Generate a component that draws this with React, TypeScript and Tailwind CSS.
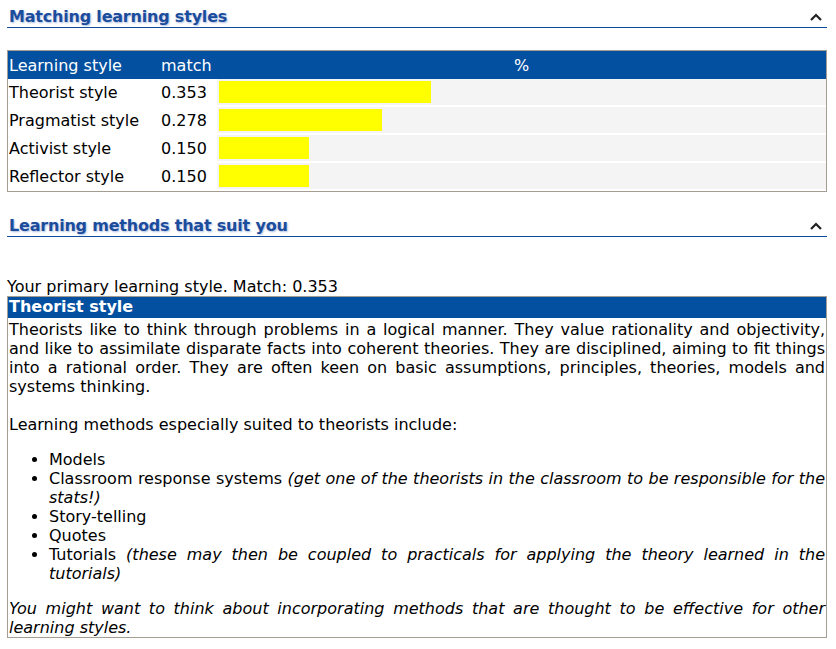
import React from "react";

const font = { fontFamily: '"DejaVu Sans", "Liberation Sans", sans-serif' };

function Chevron() {
  return (
    <svg width="14" height="10" viewBox="0 0 14 10" className="mr-[4px]">
      <path d="M2 8 L7 3 L12 8" fill="none" stroke="#222" strokeWidth="2.2" />
    </svg>
  );
}

function Heading({ title }: { title: string }) {
  return (
    <div className="flex h-[28px] items-center justify-between border-b border-[#0e4a9a] pt-[6px]">
      <span className="pl-[2px] text-[16px] font-bold tracking-[-0.2px] text-[#1c4c9c] [text-shadow:1px_1px_2px_#a9bde0]">
        {title}
      </span>
      <Chevron />
    </div>
  );
}

const rows = [
  { name: "Theorist style", match: "0.353", w: 212 },
  { name: "Pragmatist style", match: "0.278", w: 163 },
  { name: "Activist style", match: "0.150", w: 90 },
  { name: "Reflector style", match: "0.150", w: 90 },
];

export default function App() {
  return (
    <div className="ml-[7px] w-[820px] text-[16px] leading-[19px] text-black" style={font}>
      <Heading title="Matching learning styles" />
      <div className="mt-[22px] w-[820px] border border-[#a39d92]">
        <div className="flex h-[28px] items-center bg-[#0350a0] text-white">
          <div className="w-[152px] pl-[1px]">Learning style</div>
          <div className="w-[57px] pl-[1px]">match</div>
          <div className="flex-1 text-center">%</div>
        </div>
        {rows.map((r) => (
          <div key={r.name} className="flex h-[28px] pb-[2px]">
            <div className="flex w-[152px] items-center pl-[1px]">{r.name}</div>
            <div className="flex w-[57px] items-center pl-[1px]">{r.match}</div>
            <div className="flex-1 bg-[#f4f4f4] py-[2px] pl-[2px]">
              <div className="h-[22px] bg-[#ffff00]" style={{ width: r.w }} />
            </div>
          </div>
        ))}
      </div>
      <div className="mt-[17px]">
        <Heading title="Learning methods that suit you" />
      </div>
      <div className="mt-[40px]">Your primary learning style. Match: 0.353</div>
      <div className="border border-[#a39d92]">
        <div className="h-[21px] bg-[#0350a0] pl-[1px] font-bold leading-[20px] text-white">
          Theorist style
        </div>
        <div className="px-[1px] pt-[2px] text-justify">
          <p>
            Theorists like to think through problems in a logical manner. They value rationality and
            objectivity, and like to assimilate disparate facts into coherent theories. They are
            disciplined, aiming to fit things into a rational order. They are often keen on basic
            assumptions, principles, theories, models and systems thinking.
            <br />
            <br />
            Learning methods especially suited to theorists include:
          </p>
          <ul className="my-[16px] list-disc pl-[40px]">
            <li>Models</li>
            <li>
              Classroom response systems{" "}
              <i>(get one of the theorists in the classroom to be responsible for the stats!)</i>
            </li>
            <li>Story-telling</li>
            <li>Quotes</li>
            <li>
              Tutorials{" "}
              <i>(these may then be coupled to practicals for applying the theory learned in the tutorials)</i>
            </li>
          </ul>
          <p>
            <i>
              You might want to think about incorporating methods that are thought to be effective for
              other learning styles.
            </i>
          </p>
        </div>
      </div>
    </div>
  );
}
